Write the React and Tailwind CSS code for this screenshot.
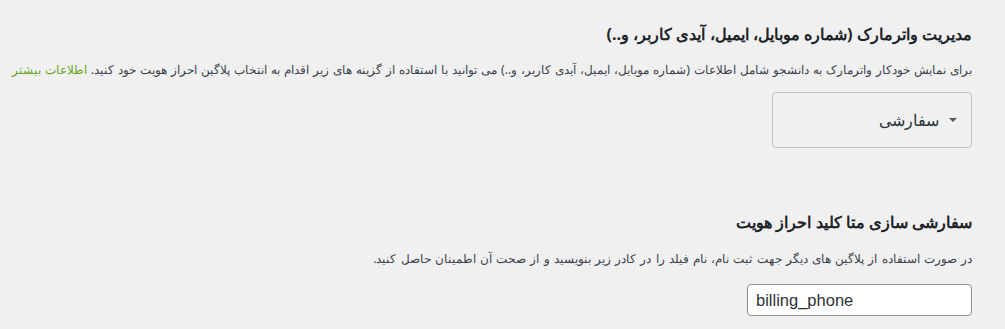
export default function App() {
  return (
    <div
      dir="rtl"
      className="w-[1005px] h-[329px] overflow-hidden bg-[#f0f0f1] text-[#1d2327] pr-[33px] pl-[10px]"
      style={{ fontFamily: '"Noto Sans", sans-serif' }}
    >
      <div className="pt-[23px]">
        <h2 className="text-[16.2px] font-bold leading-[22px]">
          مدیریت واترمارک (شماره موبایل، ایمیل، آیدی کاربر، و..)
        </h2>
        <p className="mt-[15px] text-[12.3px] leading-[20px] text-[#3c434a] whitespace-nowrap [word-spacing:0.8px]">
          برای نمایش خودکار واترمارک به دانشجو شامل اطلاعات (شماره موبایل، ایمیل، آیدی کاربر، و..) می توانید با استفاده از گزینه های زیر اقدام به انتخاب پلاگین احراز هویت خود کنید.{" "}
          <a className="text-[#6aa621]">اطلاعات بیشتر</a>
        </p>
        <div className="mt-[12px] w-[200px] h-[56px] border border-[#c3c4c7] rounded-[4px] flex items-center pr-[14px] gap-[10px]">
          <span className="w-0 h-0 border-l-[4px] border-r-[4px] border-t-[4px] border-l-transparent border-r-transparent border-t-[#50575e]" />
          <span className="text-[16px] text-[#2c3338]">سفارشی</span>
        </div>
      </div>
      <div className="pt-[63px]">
        <h2 className="text-[16px] font-bold leading-[22px]">سفارشی سازی متا کلید احراز هویت</h2>
        <p className="mt-[16px] text-[12.3px] leading-[20px] text-[#3c434a] [word-spacing:1px]">
          در صورت استفاده از پلاگین های دیگر جهت ثبت نام، نام فیلد را در کادر زیر بنویسید و از صحت آن اطمینان حاصل کنید.
        </p>
        <input
          dir="ltr"
          readOnly
          value="billing_phone"
          className="mt-[15px] w-[225px] h-[32px] bg-white border border-[#8c8f94] rounded-[4px] px-[8px] text-[16.5px] text-[#2c3338] outline-none"
          style={{ fontFamily: '"Liberation Sans", Arial, sans-serif' }}
        />
      </div>
    </div>
  );
}
